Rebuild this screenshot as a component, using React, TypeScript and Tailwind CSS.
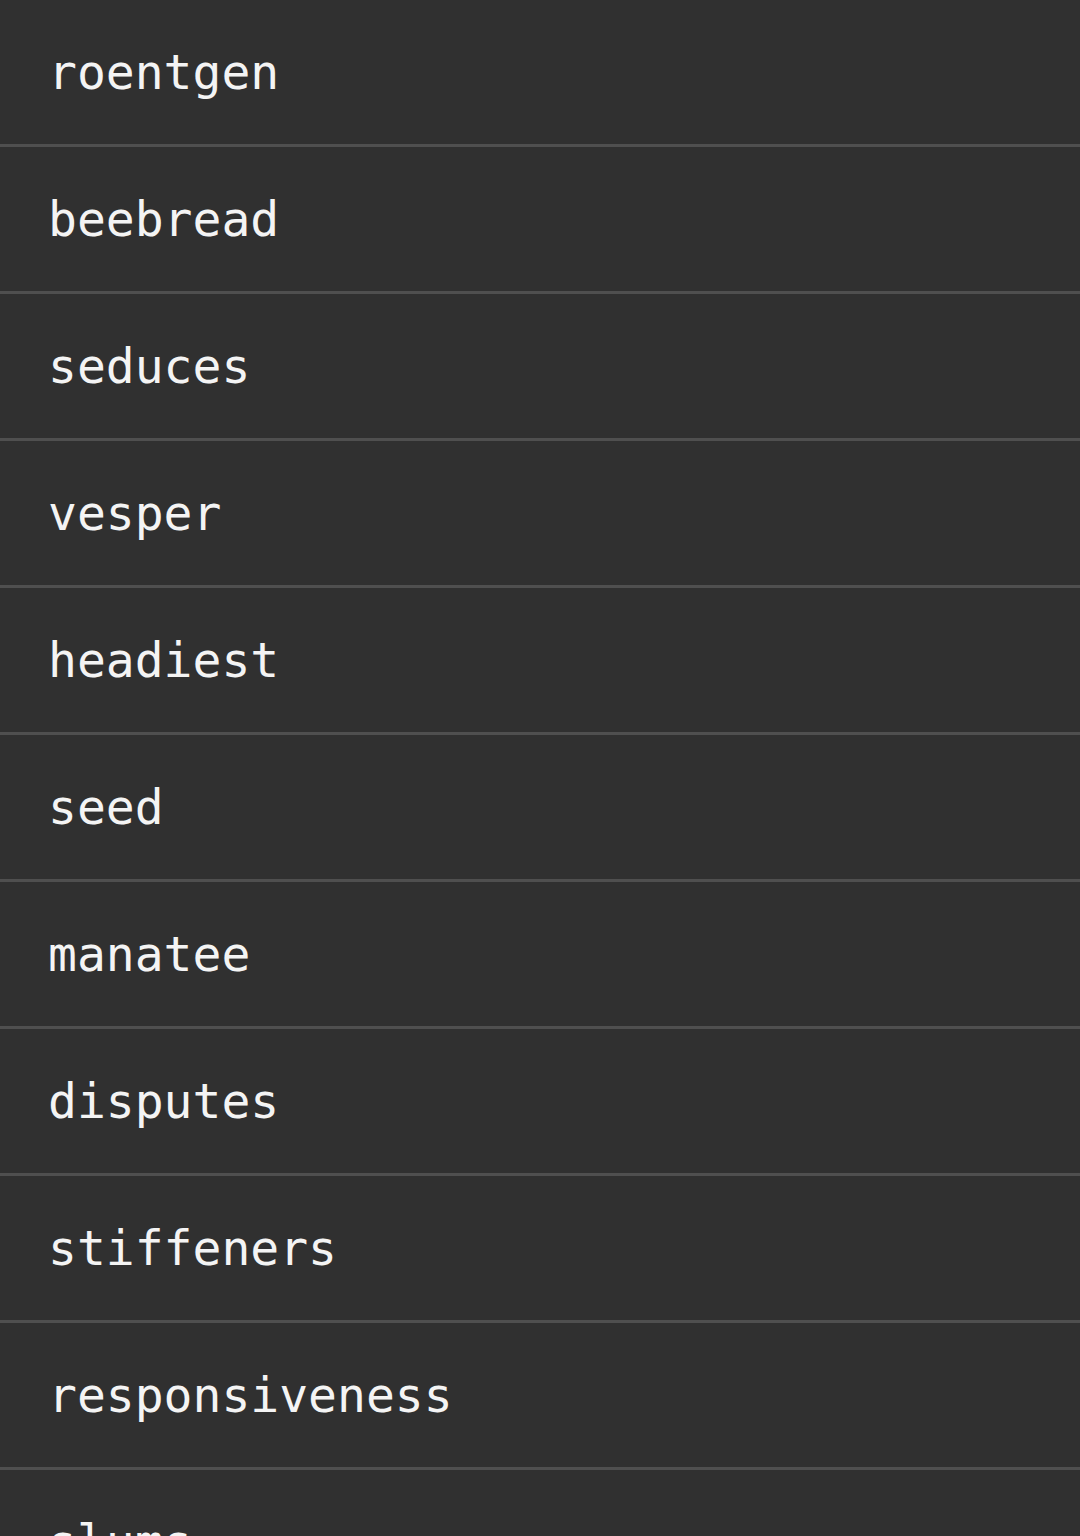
import React from 'react';

const words = [
  'roentgen',
  'beebread',
  'seduces',
  'vesper',
  'headiest',
  'seed',
  'manatee',
  'disputes',
  'stiffeners',
  'responsiveness',
  'slums',
];

const WordRow: React.FC<{ word: string }> = ({ word }) => (
  <div className="flex h-[147px] shrink-0 items-center border-b-[3px] border-[#4f4f4f] px-[48px]">
    <span className="text-[48px] leading-none text-[#f4f4f4] font-['DejaVu_Sans_Mono',monospace]">{word}</span>
  </div>
);

export default function App() {
  return (
    <div className="flex h-[1536px] w-[1080px] flex-col overflow-hidden bg-[#303030]">
      {words.map((w) => (
        <WordRow key={w} word={w} />
      ))}
    </div>
  );
}
